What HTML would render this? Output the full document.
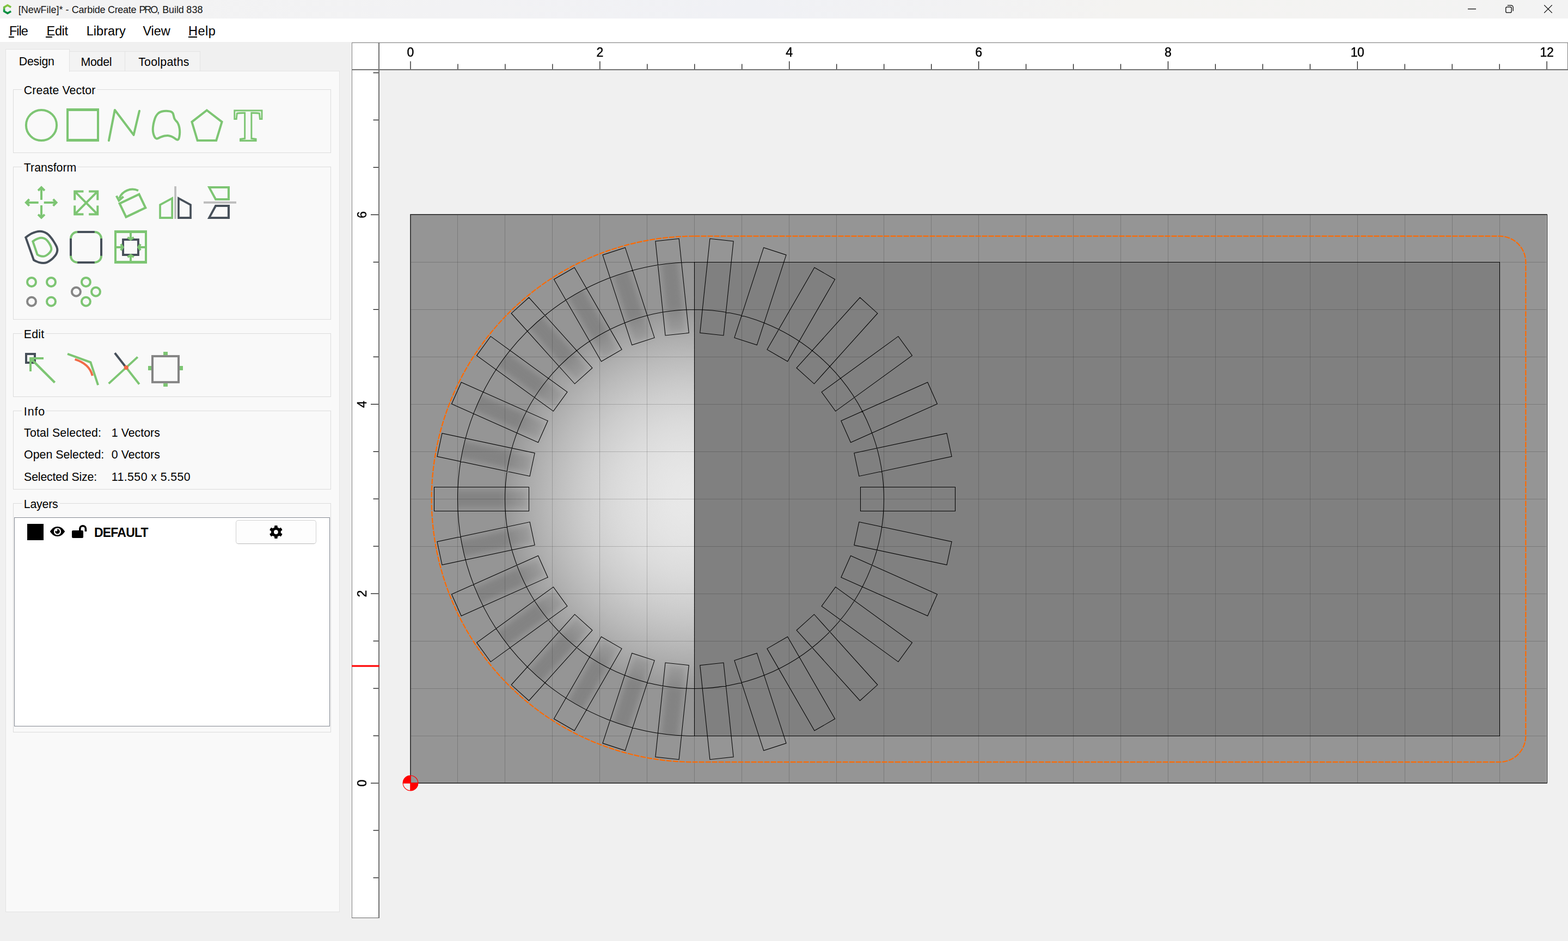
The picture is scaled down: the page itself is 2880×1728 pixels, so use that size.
<!DOCTYPE html>
<html lang="en"><head><meta charset="utf-8"><title>[NewFile]* - Carbide Create PRO, Build 838</title>
<style>html,body{margin:0;padding:0}body{width:2880px;height:1728px;overflow:hidden;position:relative;background:#f0f0f0;font-family:"Liberation Sans",sans-serif}#titlebar{position:absolute;left:0;top:0;width:2880px;height:34px;background:linear-gradient(90deg,#f3f3f3 0%,#f2f2f4 30%,#f0f1f5 48%,#f2f2f3 62%,#f4f3f1 72%,#f3f3f3 100%)}#menubar{position:absolute;left:0;top:34px;width:2880px;height:43px;background:#fff}u{text-decoration:underline;text-decoration-thickness:2px;text-underline-offset:3px}.ab{position:absolute}</style></head><body>
<svg width="2880" height="1728" viewBox="0 0 2880 1728" style="position:absolute;left:0;top:0">
<defs>
<radialGradient id="dome" gradientUnits="userSpaceOnUse" cx="1275.5" cy="916.5" r="348.0"><stop offset="0.0000" stop-color="rgb(232,232,232)"/><stop offset="0.0625" stop-color="rgb(232,232,232)"/><stop offset="0.1250" stop-color="rgb(231,231,231)"/><stop offset="0.1875" stop-color="rgb(229,229,229)"/><stop offset="0.2500" stop-color="rgb(227,227,227)"/><stop offset="0.3125" stop-color="rgb(224,224,224)"/><stop offset="0.3750" stop-color="rgb(221,221,221)"/><stop offset="0.4375" stop-color="rgb(217,217,217)"/><stop offset="0.5000" stop-color="rgb(212,212,212)"/><stop offset="0.5625" stop-color="rgb(207,207,207)"/><stop offset="0.6250" stop-color="rgb(201,201,201)"/><stop offset="0.6875" stop-color="rgb(194,194,194)"/><stop offset="0.7500" stop-color="rgb(187,187,187)"/><stop offset="0.8125" stop-color="rgb(179,179,179)"/><stop offset="0.8750" stop-color="rgb(171,171,171)"/><stop offset="0.9375" stop-color="rgb(162,162,162)"/><stop offset="1.0000" stop-color="rgb(152,152,152)"/></radialGradient>
<clipPath id="clipL"><path d="M1275.5,481.5 A435.0,435.0 0 0 0 1275.5,1351.5 Z"/></clipPath>
<clipPath id="clipDome"><path d="M1275.5,568.5 A348.0,348.0 0 0 0 1275.5,1264.5 Z"/></clipPath>
<filter id="blur" x="-20%" y="-20%" width="140%" height="140%"><feGaussianBlur stdDeviation="5"/></filter>
<linearGradient id="strip" gradientUnits="userSpaceOnUse" x1="304.5" y1="0" x2="435.0" y2="0"><stop offset="0" stop-color="#9e9e9e"/><stop offset="0.4" stop-color="#838383"/><stop offset="1" stop-color="#838383"/></linearGradient>
</defs>
<rect x="646" y="78" width="2234" height="50" fill="#fff"/>
<rect x="646" y="128" width="50" height="1557" fill="#fff"/>
<rect x="753" y="393" width="2089" height="1046" fill="#959595"/>
<rect x="1275.5" y="481.5" width="1479.0" height="870.0" fill="#808080"/>
<circle cx="1275.5" cy="916.5" r="348.0" fill="url(#dome)" clip-path="url(#clipDome)"/>
<g clip-path="url(#clipL)"><g filter="url(#blur)">
<rect x="308.50" y="-14.75" width="170.00" height="29.50" fill="url(#strip)" transform="translate(1275.5,916.5) rotate(-96)"/>
<rect x="308.50" y="-14.75" width="170.00" height="29.50" fill="url(#strip)" transform="translate(1275.5,916.5) rotate(-108)"/>
<rect x="308.50" y="-14.75" width="170.00" height="29.50" fill="url(#strip)" transform="translate(1275.5,916.5) rotate(-120)"/>
<rect x="308.50" y="-14.75" width="170.00" height="29.50" fill="url(#strip)" transform="translate(1275.5,916.5) rotate(-132)"/>
<rect x="308.50" y="-14.75" width="170.00" height="29.50" fill="url(#strip)" transform="translate(1275.5,916.5) rotate(-144)"/>
<rect x="308.50" y="-14.75" width="170.00" height="29.50" fill="url(#strip)" transform="translate(1275.5,916.5) rotate(-156)"/>
<rect x="308.50" y="-14.75" width="170.00" height="29.50" fill="url(#strip)" transform="translate(1275.5,916.5) rotate(-168)"/>
<rect x="308.50" y="-14.75" width="170.00" height="29.50" fill="url(#strip)" transform="translate(1275.5,916.5) rotate(-180)"/>
<rect x="308.50" y="-14.75" width="170.00" height="29.50" fill="url(#strip)" transform="translate(1275.5,916.5) rotate(-192)"/>
<rect x="308.50" y="-14.75" width="170.00" height="29.50" fill="url(#strip)" transform="translate(1275.5,916.5) rotate(-204)"/>
<rect x="308.50" y="-14.75" width="170.00" height="29.50" fill="url(#strip)" transform="translate(1275.5,916.5) rotate(-216)"/>
<rect x="308.50" y="-14.75" width="170.00" height="29.50" fill="url(#strip)" transform="translate(1275.5,916.5) rotate(-228)"/>
<rect x="308.50" y="-14.75" width="170.00" height="29.50" fill="url(#strip)" transform="translate(1275.5,916.5) rotate(-240)"/>
<rect x="308.50" y="-14.75" width="170.00" height="29.50" fill="url(#strip)" transform="translate(1275.5,916.5) rotate(-252)"/>
<rect x="308.50" y="-14.75" width="170.00" height="29.50" fill="url(#strip)" transform="translate(1275.5,916.5) rotate(-264)"/>
</g></g>
<path d="M840.50,394.5 V1438.5 M927.50,394.5 V1438.5 M1014.50,394.5 V1438.5 M1101.50,394.5 V1438.5 M1188.50,394.5 V1438.5 M1275.50,394.5 V1438.5 M1362.50,394.5 V1438.5 M1449.50,394.5 V1438.5 M1536.50,394.5 V1438.5 M1623.50,394.5 V1438.5 M1710.50,394.5 V1438.5 M1797.50,394.5 V1438.5 M1884.50,394.5 V1438.5 M1971.50,394.5 V1438.5 M2058.50,394.5 V1438.5 M2145.50,394.5 V1438.5 M2232.50,394.5 V1438.5 M2319.50,394.5 V1438.5 M2406.50,394.5 V1438.5 M2493.50,394.5 V1438.5 M2580.50,394.5 V1438.5 M2667.50,394.5 V1438.5 M2754.50,394.5 V1438.5 M753.5,1351.50 H2841.5 M753.5,1264.50 H2841.5 M753.5,1177.50 H2841.5 M753.5,1090.50 H2841.5 M753.5,1003.50 H2841.5 M753.5,916.50 H2841.5 M753.5,829.50 H2841.5 M753.5,742.50 H2841.5 M753.5,655.50 H2841.5 M753.5,568.50 H2841.5 M753.5,481.50 H2841.5" stroke="#000" stroke-opacity="0.175" stroke-width="1.0" fill="none"/>
<path d="M1275.5,481.5 A435.0,435.0 0 0 0 1275.5,1351.5 M1275.5,481.5 H2754.5 V1351.5 H1275.5 Z M1623.5,916.5 A348.0,348.0 0 1 0 927.5,916.5 A348.0,348.0 0 1 0 1623.5,916.5 Z M1580.50,894.50 L1754.50,894.50 L1754.50,938.50 L1580.50,938.50 Z M1568.82,831.92 L1739.02,795.74 L1748.07,838.29 L1577.87,874.47 Z M1544.83,772.78 L1703.78,702.01 L1721.48,741.75 L1562.52,812.52 Z M1509.06,719.92 L1649.83,617.65 L1675.40,652.84 L1534.63,755.12 Z M1463.09,675.66 L1579.52,546.35 L1611.84,575.46 L1495.41,704.77 Z M1408.91,641.92 L1495.91,491.23 L1533.59,512.98 L1446.59,663.67 Z M1348.91,620.18 L1402.68,454.70 L1444.05,468.14 L1390.28,633.62 Z M1285.70,611.39 L1303.89,438.35 L1347.15,442.89 L1328.96,615.94 Z M1222.04,615.94 L1203.85,442.89 L1247.11,438.35 L1265.30,611.39 Z M1160.72,633.62 L1106.95,468.14 L1148.32,454.70 L1202.09,620.18 Z M1104.41,663.67 L1017.41,512.98 L1055.09,491.23 L1142.09,641.92 Z M1055.59,704.77 L939.16,575.46 L971.48,546.35 L1087.91,675.66 Z M1016.37,755.12 L875.60,652.84 L901.17,617.65 L1041.94,719.92 Z M988.48,812.52 L829.52,741.75 L847.22,702.01 L1006.17,772.78 Z M973.13,874.47 L802.93,838.29 L811.98,795.74 L982.18,831.92 Z M971.50,938.50 L797.50,938.50 L797.50,894.50 L971.50,894.50 Z M982.18,1001.08 L811.98,1037.26 L802.93,994.71 L973.13,958.53 Z M1006.17,1060.22 L847.22,1130.99 L829.52,1091.25 L988.48,1020.48 Z M1041.94,1113.08 L901.17,1215.35 L875.60,1180.16 L1016.37,1077.88 Z M1087.91,1157.34 L971.48,1286.65 L939.16,1257.54 L1055.59,1128.23 Z M1142.09,1191.08 L1055.09,1341.77 L1017.41,1320.02 L1104.41,1169.33 Z M1202.09,1212.82 L1148.32,1378.30 L1106.95,1364.86 L1160.72,1199.38 Z M1265.30,1221.61 L1247.11,1394.65 L1203.85,1390.11 L1222.04,1217.06 Z M1328.96,1217.06 L1347.15,1390.11 L1303.89,1394.65 L1285.70,1221.61 Z M1390.28,1199.38 L1444.05,1364.86 L1402.68,1378.30 L1348.91,1212.82 Z M1446.59,1169.33 L1533.59,1320.02 L1495.91,1341.77 L1408.91,1191.08 Z M1495.41,1128.23 L1611.84,1257.54 L1579.52,1286.65 L1463.09,1157.34 Z M1534.63,1077.88 L1675.40,1180.16 L1649.83,1215.35 L1509.06,1113.08 Z M1562.52,1020.48 L1721.48,1091.25 L1703.78,1130.99 L1544.83,1060.22 Z M1577.87,958.53 L1748.07,994.71 L1739.02,1037.26 L1568.82,1001.08 Z" stroke="#000" stroke-width="1.05" fill="none"/>
<path d="M1275.5,433.65000000000003 H2754.5 A47.85,47.85 0 0 1 2802.35,481.5 V1351.5 A47.85,47.85 0 0 1 2754.5,1399.35 H1275.5 A482.84999999999997,482.84999999999997 0 0 1 1275.5,433.65000000000003 Z" stroke="#ff6a00" stroke-width="2.2" stroke-dasharray="10 2" fill="none"/>
<path d="M2840.5,395 V1437" stroke="#fff" stroke-opacity="0.45" stroke-width="1" fill="none"/>
<path d="M752.5,392.5 H2842.5 V1439.5 H752.5 Z" fill="none" stroke="#f8f8f8" stroke-width="1"/>
<path d="M2841,394 H754 V1438 H2841" fill="none" stroke="#404040" stroke-width="2" stroke-linejoin="round"/>
<path d="M2841.6,393.5 V1438.5" fill="none" stroke="#262626" stroke-width="1.2"/>
<g transform="translate(754,1438)"><path d="M0,0 L0,14.2 A14.2,14.2 0 0 1 -14.2,0 Z" fill="#f0f0f0"/><path d="M0,0 L-14.2,0 A14.2,14.2 0 0 1 0,-14.2 Z M0,0 L14.2,0 A14.2,14.2 0 0 1 0,14.2 Z" fill="#ff0000"/><path d="M-14.2,0 H14.2 M0,-14.2 V14.2" stroke="#ff0000" stroke-width="1.6" fill="none"/><circle r="13.799999999999999" fill="none" stroke="#ff0000" stroke-width="1.1"/></g>
<path d="M646,78.5 H2880 M646.5,78 V1685 M2879.5,78 V128" stroke="#808080" stroke-width="1" fill="none"/>
<path d="M646,1685.5 H697" stroke="#666" stroke-width="1" fill="none"/>
<path d="M646,128 H2880 M696,78 V1685.5" stroke="#727272" stroke-width="2" fill="none"/>
<path d="M754.00,112.5 V127 M840.97,117.5 V127 M927.93,117.5 V127 M1014.89,117.5 V127 M1101.86,112.5 V127 M1188.83,117.5 V127 M1275.79,117.5 V127 M1362.76,117.5 V127 M1449.72,112.5 V127 M1536.68,117.5 V127 M1623.65,117.5 V127 M1710.62,117.5 V127 M1797.58,112.5 V127 M1884.55,117.5 V127 M1971.51,117.5 V127 M2058.48,117.5 V127 M2145.44,112.5 V127 M2232.40,117.5 V127 M2319.37,117.5 V127 M2406.34,117.5 V127 M2493.30,112.5 V127 M2580.27,117.5 V127 M2667.23,117.5 V127 M2754.20,117.5 V127 M2841.16,112.5 V127 M685.5,1611.93 H695 M685.5,1524.96 H695 M681,1438.00 H695 M685.5,1351.04 H695 M685.5,1264.07 H695 M685.5,1177.11 H695 M681,1090.14 H695 M685.5,1003.17 H695 M685.5,916.21 H695 M685.5,829.25 H695 M681,742.28 H695 M685.5,655.31 H695 M685.5,568.35 H695 M685.5,481.38 H695 M681,394.42 H695 M685.5,307.45 H695 M685.5,220.49 H695 M685.5,133.52 H695" stroke="#000" stroke-opacity="0.95" stroke-width="1.25" fill="none"/>
<text x="753.75" y="104" font-family="Liberation Sans, sans-serif" font-size="23" text-anchor="middle" letter-spacing="-0.5" fill="#000" stroke="#000" stroke-width="0.45">0</text>
<text x="1101.61" y="104" font-family="Liberation Sans, sans-serif" font-size="23" text-anchor="middle" letter-spacing="-0.5" fill="#000" stroke="#000" stroke-width="0.45">2</text>
<text x="1449.47" y="104" font-family="Liberation Sans, sans-serif" font-size="23" text-anchor="middle" letter-spacing="-0.5" fill="#000" stroke="#000" stroke-width="0.45">4</text>
<text x="1797.33" y="104" font-family="Liberation Sans, sans-serif" font-size="23" text-anchor="middle" letter-spacing="-0.5" fill="#000" stroke="#000" stroke-width="0.45">6</text>
<text x="2145.19" y="104" font-family="Liberation Sans, sans-serif" font-size="23" text-anchor="middle" letter-spacing="-0.5" fill="#000" stroke="#000" stroke-width="0.45">8</text>
<text x="2493.05" y="104" font-family="Liberation Sans, sans-serif" font-size="23" text-anchor="middle" letter-spacing="-0.5" fill="#000" stroke="#000" stroke-width="0.45">10</text>
<text x="2840.91" y="104" font-family="Liberation Sans, sans-serif" font-size="23" text-anchor="middle" letter-spacing="-0.5" fill="#000" stroke="#000" stroke-width="0.45">12</text>
<text transform="translate(672.6,1438.25) rotate(-90)" font-family="Liberation Sans, sans-serif" font-size="23" text-anchor="middle" letter-spacing="-0.5" fill="#000" stroke="#000" stroke-width="0.45">0</text>
<text transform="translate(672.6,1090.39) rotate(-90)" font-family="Liberation Sans, sans-serif" font-size="23" text-anchor="middle" letter-spacing="-0.5" fill="#000" stroke="#000" stroke-width="0.45">2</text>
<text transform="translate(672.6,742.53) rotate(-90)" font-family="Liberation Sans, sans-serif" font-size="23" text-anchor="middle" letter-spacing="-0.5" fill="#000" stroke="#000" stroke-width="0.45">4</text>
<text transform="translate(672.6,394.67) rotate(-90)" font-family="Liberation Sans, sans-serif" font-size="23" text-anchor="middle" letter-spacing="-0.5" fill="#000" stroke="#000" stroke-width="0.45">6</text>
<rect x="646" y="1221.45" width="51" height="3.1" fill="#ff0000"/>
</svg>
<div id="titlebar"></div><div id="menubar"></div>
<div id="title" style="position:absolute;left:0;top:0;width:400px;height:34px">
<div style="position:absolute;left:33.80px;top:6.66px;font-family:'Liberation Sans',sans-serif;font-size:18px;font-weight:400;line-height:23px;white-space:pre;color:#161616;letter-spacing:-0.048px;word-spacing:0px;">[NewFile]*</div>
<div style="position:absolute;left:120.40px;top:6.66px;font-family:'Liberation Sans',sans-serif;font-size:18px;font-weight:400;line-height:23px;white-space:pre;color:#161616;letter-spacing:0.900px;word-spacing:0px;">-</div>
<div style="position:absolute;left:131.80px;top:6.66px;font-family:'Liberation Sans',sans-serif;font-size:18px;font-weight:400;line-height:23px;white-space:pre;color:#161616;letter-spacing:-0.224px;word-spacing:0px;">Carbide</div>
<div style="position:absolute;left:198.00px;top:6.66px;font-family:'Liberation Sans',sans-serif;font-size:18px;font-weight:400;line-height:23px;white-space:pre;color:#161616;letter-spacing:-0.326px;word-spacing:0px;">Create</div>
<div style="position:absolute;left:255.40px;top:6.66px;font-family:'Liberation Sans',sans-serif;font-size:18px;font-weight:400;line-height:23px;white-space:pre;color:#161616;letter-spacing:-2.072px;word-spacing:0px;">PRO,</div>
<div style="position:absolute;left:298.20px;top:6.66px;font-family:'Liberation Sans',sans-serif;font-size:18px;font-weight:400;line-height:23px;white-space:pre;color:#161616;letter-spacing:-0.108px;word-spacing:0px;">Build</div>
<div style="position:absolute;left:342.30px;top:6.66px;font-family:'Liberation Sans',sans-serif;font-size:18px;font-weight:400;line-height:23px;white-space:pre;color:#161616;letter-spacing:0.127px;word-spacing:0px;">838</div>
</div>
<div style="position:absolute;left:17.00px;top:41.76px;font-family:'Liberation Sans',sans-serif;font-size:23.5px;font-weight:400;line-height:31px;white-space:pre;color:#000;letter-spacing:-1.025px;word-spacing:0px;">File</div>
<div style="position:absolute;left:16.0px;top:67.1px;width:10.0px;height:2px;background:#000"></div>
<div style="position:absolute;left:85.60px;top:41.76px;font-family:'Liberation Sans',sans-serif;font-size:23.5px;font-weight:400;line-height:31px;white-space:pre;color:#000;letter-spacing:-0.367px;word-spacing:0px;">Edit</div>
<div style="position:absolute;left:84.1px;top:67.1px;width:11.9px;height:2px;background:#000"></div>
<div style="position:absolute;left:158.70px;top:41.76px;font-family:'Liberation Sans',sans-serif;font-size:23.5px;font-weight:400;line-height:31px;white-space:pre;color:#000;letter-spacing:0.026px;word-spacing:0px;">Library</div>
<div style="position:absolute;left:262.40px;top:41.76px;font-family:'Liberation Sans',sans-serif;font-size:23.5px;font-weight:400;line-height:31px;white-space:pre;color:#000;letter-spacing:-0.039px;word-spacing:0px;">View</div>
<div style="position:absolute;left:346.00px;top:41.76px;font-family:'Liberation Sans',sans-serif;font-size:23.5px;font-weight:400;line-height:31px;white-space:pre;color:#000;letter-spacing:0.485px;word-spacing:0px;">Help</div>
<div style="position:absolute;left:346.1px;top:67.1px;width:15.9px;height:2px;background:#000"></div>
<div style="position:absolute;left:127px;top:94px;width:103px;height:37px;box-sizing:border-box;background:#f3f3f3;border:1px solid #e3e3e3;"></div>
<div style="position:absolute;left:229px;top:94px;width:139px;height:37px;box-sizing:border-box;background:#f3f3f3;border:1px solid #e3e3e3;"></div>
<div style="position:absolute;left:10px;top:130px;width:614px;height:1545px;box-sizing:border-box;background:#f9f9f9;border:1px solid #e3e3e3;"></div>
<div style="position:absolute;left:10px;top:90px;width:118px;height:42px;box-sizing:border-box;background:#f9f9f9;border:1px solid #e3e3e3;border-bottom:none;"></div>
<div style="position:absolute;left:34.80px;top:98.51px;font-family:'Liberation Sans',sans-serif;font-size:21.33px;font-weight:400;line-height:28px;white-space:pre;color:#000;letter-spacing:-0.258px;word-spacing:0px;">Design</div>
<div style="position:absolute;left:148.40px;top:100.41px;font-family:'Liberation Sans',sans-serif;font-size:21.33px;font-weight:400;line-height:28px;white-space:pre;color:#000;letter-spacing:-0.223px;word-spacing:0px;">Model</div>
<div style="position:absolute;left:254.20px;top:100.41px;font-family:'Liberation Sans',sans-serif;font-size:21.33px;font-weight:400;line-height:28px;white-space:pre;color:#000;letter-spacing:0.248px;word-spacing:0px;">Toolpaths</div>
<div style="position:absolute;left:24px;top:164px;width:584px;height:117px;box-sizing:border-box;border:1px solid #dcdcdc;"></div>
<div style="position:absolute;left:40px;top:164px;width:138.1px;height:1px;background:#f9f9f9"></div>
<div style="position:absolute;left:43.80px;top:152.21px;font-family:'Liberation Sans',sans-serif;font-size:21.33px;font-weight:400;line-height:28px;white-space:pre;color:#000;letter-spacing:0.099px;word-spacing:0px;">Create Vector</div>
<div style="position:absolute;left:24px;top:306px;width:584px;height:281px;box-sizing:border-box;border:1px solid #dcdcdc;"></div>
<div style="position:absolute;left:40px;top:306px;width:103.1px;height:1px;background:#f9f9f9"></div>
<div style="position:absolute;left:43.80px;top:294.21px;font-family:'Liberation Sans',sans-serif;font-size:21.33px;font-weight:400;line-height:28px;white-space:pre;color:#000;letter-spacing:0.026px;word-spacing:0px;">Transform</div>
<div style="position:absolute;left:24px;top:612px;width:584px;height:117px;box-sizing:border-box;border:1px solid #dcdcdc;"></div>
<div style="position:absolute;left:40px;top:612px;width:43.9px;height:1px;background:#f9f9f9"></div>
<div style="position:absolute;left:43.80px;top:600.21px;font-family:'Liberation Sans',sans-serif;font-size:21.33px;font-weight:400;line-height:28px;white-space:pre;color:#000;letter-spacing:0.211px;word-spacing:0px;">Edit</div>
<div style="position:absolute;left:24px;top:754px;width:584px;height:145px;box-sizing:border-box;border:1px solid #dcdcdc;"></div>
<div style="position:absolute;left:40px;top:754px;width:44.9px;height:1px;background:#f9f9f9"></div>
<div style="position:absolute;left:43.80px;top:742.21px;font-family:'Liberation Sans',sans-serif;font-size:21.33px;font-weight:400;line-height:28px;white-space:pre;color:#000;letter-spacing:0.941px;word-spacing:0px;">Info</div>
<div style="position:absolute;left:24px;top:924px;width:584px;height:421px;box-sizing:border-box;border:1px solid #dcdcdc;"></div>
<div style="position:absolute;left:40px;top:924px;width:69.5px;height:1px;background:#f9f9f9"></div>
<div style="position:absolute;left:43.80px;top:912.21px;font-family:'Liberation Sans',sans-serif;font-size:21.33px;font-weight:400;line-height:28px;white-space:pre;color:#000;letter-spacing:-0.206px;word-spacing:0px;">Layers</div>
<div style="position:absolute;left:44.10px;top:781.41px;font-family:'Liberation Sans',sans-serif;font-size:21.33px;font-weight:400;line-height:28px;white-space:pre;color:#000;letter-spacing:0.142px;word-spacing:0px;">Total Selected:</div>
<div style="position:absolute;left:204.80px;top:781.41px;font-family:'Liberation Sans',sans-serif;font-size:21.33px;font-weight:400;line-height:28px;white-space:pre;color:#000;letter-spacing:0.022px;word-spacing:0px;">1 Vectors</div>
<div style="position:absolute;left:44.10px;top:821.31px;font-family:'Liberation Sans',sans-serif;font-size:21.33px;font-weight:400;line-height:28px;white-space:pre;color:#000;letter-spacing:0.013px;word-spacing:0px;">Open Selected:</div>
<div style="position:absolute;left:204.80px;top:821.31px;font-family:'Liberation Sans',sans-serif;font-size:21.33px;font-weight:400;line-height:28px;white-space:pre;color:#000;letter-spacing:0.022px;word-spacing:0px;">0 Vectors</div>
<div style="position:absolute;left:44.10px;top:862.01px;font-family:'Liberation Sans',sans-serif;font-size:21.33px;font-weight:400;line-height:28px;white-space:pre;color:#000;letter-spacing:-0.173px;word-spacing:0px;">Selected Size:</div>
<div style="position:absolute;left:204.80px;top:862.01px;font-family:'Liberation Sans',sans-serif;font-size:21.33px;font-weight:400;line-height:28px;white-space:pre;color:#000;letter-spacing:0.412px;word-spacing:0px;">11.550 x 5.550</div>
<div style="position:absolute;left:26px;top:950px;width:580px;height:384px;box-sizing:border-box;background:#fff;border:1px solid #828790;"></div>
<div style="position:absolute;left:50px;top:962px;width:30px;height:30px;box-sizing:border-box;background:#000;"></div>
<div style="position:absolute;left:173.00px;top:963.03px;font-family:'Liberation Sans',sans-serif;font-size:23px;font-weight:700;line-height:30px;white-space:pre;color:#000;letter-spacing:-0.791px;word-spacing:0px;">DEFAULT</div>
<div style="position:absolute;left:433px;top:955px;width:148px;height:44px;box-sizing:border-box;background:#fdfdfd;border:1px solid #d0d0d0;border-radius:5px;border-bottom-color:#b8b8b8;"></div>
<svg width="2880" height="1728" viewBox="0 0 2880 1728" style="position:absolute;left:0;top:0;pointer-events:none">
<defs><linearGradient id="lg" x1="0" y1="0" x2="0" y2="1"><stop offset="0" stop-color="#8cc63f"/><stop offset="0.45" stop-color="#5db946"/><stop offset="0.6" stop-color="#129a48"/><stop offset="1" stop-color="#0a8a3f"/></linearGradient></defs>
<path d="M20.2,13.2 L13.9,9.6 L7.6,13.2 V20.8 L13.9,24.4 L20.2,20.8" fill="none" stroke="url(#lg)" stroke-width="3.6" stroke-linejoin="miter"/>
<path d="M2696,16.5 H2711" stroke="#000" stroke-width="1.25" fill="none"/>
<rect x="2765.8" y="12.8" width="10.4" height="10.4" rx="2.2" fill="none" stroke="#000" stroke-width="1.25"/>
<path d="M2769.2,9.8 H2775.5 A3.7,3.7 0 0 1 2779.2,13.5 V19.8" fill="none" stroke="#000" stroke-width="1.25" stroke-linecap="round"/>
<path d="M2836.6,9.6 L2850.4,23.4 M2850.4,9.6 L2836.6,23.4" stroke="#000" stroke-width="1.25" fill="none" stroke-linecap="round"/>
<circle cx="76" cy="230" r="28.1" fill="none" stroke="#7dc573" stroke-width="4"/>
<path fill-rule="evenodd" fill="#7dc573" d="M122,199 H182 V260 H122 Z M126.1,204 V255 H178 V204 Z"/>
<path d="M199.9,258.1 L210.9,202 L245.5,247.8 L256,203.7" fill="none" stroke="#7dc573" stroke-width="4" stroke-linecap="round" stroke-linejoin="round"/>
<path d="M300.98,204.10 C303.35,203.77 306.13,203.80 308.25,203.92 C310.38,204.04 312.20,204.22 313.71,204.83 C315.23,205.44 316.49,206.32 317.35,207.56 C318.21,208.80 318.38,210.64 318.87,212.29 C319.35,213.94 319.60,215.93 320.26,217.44 C320.92,218.96 321.88,220.17 322.81,221.39 C323.74,222.60 324.93,223.31 325.84,224.72 C326.75,226.14 327.61,227.90 328.27,229.88 C328.92,231.85 329.46,234.32 329.78,236.55 C330.11,238.77 330.26,240.89 330.21,243.22 C330.16,245.54 329.82,248.52 329.48,250.49 C329.13,252.47 328.70,254.00 328.14,255.04 C327.59,256.08 326.93,256.64 326.14,256.74 C325.35,256.84 324.48,256.24 323.41,255.65 C322.35,255.06 321.29,254.10 319.78,253.22 C318.26,252.34 316.24,251.08 314.32,250.37 C312.40,249.67 310.27,249.11 308.25,248.98 C306.23,248.85 304.31,249.13 302.19,249.58 C300.07,250.04 297.44,251.00 295.52,251.71 C293.60,252.41 291.93,253.32 290.67,253.83 C289.40,254.33 288.87,254.87 287.94,254.74 C287.01,254.61 285.95,254.05 285.09,253.04 C284.23,252.03 283.42,250.31 282.78,248.67 C282.15,247.04 281.60,245.14 281.27,243.22 C280.93,241.30 280.73,239.48 280.78,237.15 C280.83,234.83 281.14,231.90 281.57,229.27 C282.01,226.64 282.68,223.81 283.39,221.39 C284.10,218.96 284.80,216.74 285.82,214.71 C286.83,212.69 288.09,210.72 289.45,209.26 C290.82,207.79 292.08,206.78 294.00,205.92 C295.92,205.06 298.60,204.44 300.98,204.10 Z" fill="none" stroke="#7dc573" stroke-width="4" stroke-linejoin="round"/>
<path d="M379.90,202.50 L407.60,223.80 L397.20,258.00 L362.70,258.00 L352.40,223.80 Z" fill="none" stroke="#7dc573" stroke-width="4" stroke-linejoin="miter"/>
<text transform="translate(455.8,258.7) scale(0.935,1)" x="0" y="0" text-anchor="middle" font-family="Liberation Serif, serif" font-weight="700" font-size="84.5" fill="none" stroke="#7dc573" stroke-width="3.1" stroke-linejoin="miter">T</text>
<path d="M80.70,371.90 L103.50,371.90 M97.60,377.80 L103.50,371.90 L97.60,366.00" stroke="#7dc573" stroke-width="4" fill="none" stroke-linejoin="miter" stroke-miterlimit="10"/>
<path d="M76.00,376.90 L76.00,399.70 M70.10,393.80 L76.00,399.70 L81.90,393.80" stroke="#7dc573" stroke-width="4" fill="none" stroke-linejoin="miter" stroke-miterlimit="10"/>
<path d="M70.70,371.90 L47.90,371.90 M53.80,366.00 L47.90,371.90 L53.80,377.80" stroke="#7dc573" stroke-width="4" fill="none" stroke-linejoin="miter" stroke-miterlimit="10"/>
<path d="M76.00,366.90 L76.00,344.10 M81.90,350.00 L76.00,344.10 L70.10,350.00" stroke="#7dc573" stroke-width="4" fill="none" stroke-linejoin="miter" stroke-miterlimit="10"/>
<path d="M137.2,367.59999999999997 V351.4 H153.39999999999998 M163.10000000000002,351.4 H179.3 V367.59999999999997 M179.3,377.40000000000003 V393.6 H163.10000000000002 M153.39999999999998,393.6 H137.2 V377.40000000000003 M137.2,351.4 L179.3,393.6 M179.3,351.4 L137.2,393.6" fill="none" stroke="#7dc573" stroke-width="4" stroke-linejoin="miter"/>
<rect x="-19.8" y="-13.75" width="39.6" height="27.5" transform="translate(243.5,377.6) rotate(-25.5)" fill="none" stroke="#7dc573" stroke-width="4.1" stroke-linejoin="miter"/>
<path d="M254,350 A26,26 0 0 0 219.1,364.2" fill="none" stroke="#7dc573" stroke-width="4"/>
<path d="M213.77,359.59 L218.38,368.33 L226.69,361.05" fill="none" stroke="#7dc573" stroke-width="4" stroke-linejoin="miter"/>
<path fill-rule="evenodd" fill="#7dc573" d="M292.2,401.9 V374.9 L318,360.9 V401.9 Z M295.9,398 H314.3 V367.3 L295.9,377.3 Z"/>
<rect x="320.2" y="342.1" width="3.7" height="59.8" fill="#bdbdbd"/>
<path fill-rule="evenodd" fill="#47505a" d="M351.9,401.9 V374.9 L326.1,360.9 V401.9 Z M348.2,398 H329.8 V367.3 L348.2,377.3 Z"/>
<path fill-rule="evenodd" fill="#7dc573" d="M380.9,342.1 H422 V367.9 H394.9 Z M387.4,346.1 L397.3,364 H417.9 V346.1 Z"/>
<rect x="374" y="369.9" width="60" height="3.9" fill="#bdbdbd"/>
<path fill-rule="evenodd" fill="#47505a" d="M394.9,376.1 H422 V401.9 H380.9 Z M397.3,380 L387.4,397.9 H417.9 V380 Z"/>
<path d="M47.28,436.08 C48.09,435.47 50.31,433.65 52.13,432.44 C53.95,431.22 55.87,429.89 58.19,428.80 C60.52,427.71 63.55,426.55 66.08,425.89 C68.60,425.23 71.03,424.86 73.35,424.86 C75.68,424.86 77.90,425.23 80.02,425.89 C82.15,426.55 84.37,427.71 86.09,428.80 C87.81,429.89 88.92,430.97 90.33,432.44 C91.75,433.90 93.26,435.87 94.58,437.59 C95.89,439.31 97.00,440.88 98.22,442.75 C99.43,444.62 100.84,446.99 101.86,448.81 C102.87,450.63 103.70,451.84 104.28,453.66 C104.87,455.48 105.58,457.50 105.37,459.73 C105.17,461.95 104.26,464.78 103.07,467.00 C101.88,469.23 99.94,471.25 98.22,473.07 C96.50,474.89 94.78,476.45 92.76,477.92 C90.74,479.39 88.31,481.00 86.09,481.86 C83.86,482.72 81.84,483.07 79.42,483.07 C76.99,483.07 73.86,482.47 71.53,481.86 C69.21,481.26 67.07,480.17 65.47,479.44 C63.87,478.70 62.54,477.77 61.95,477.43 Z" fill="none" stroke="#47505a" stroke-width="4" stroke-linejoin="miter"/>
<path d="M60.32,443.35 C61.07,442.85 63.20,441.23 64.86,440.32 C66.53,439.41 68.55,438.47 70.32,437.90 C72.09,437.32 73.76,436.92 75.48,436.86 C77.19,436.81 79.06,437.07 80.63,437.59 C82.20,438.12 83.66,439.06 84.88,440.02 C86.09,440.98 86.90,442.09 87.91,443.35 C88.92,444.62 90.03,446.08 90.94,447.60 C91.85,449.11 92.81,450.73 93.37,452.45 C93.92,454.17 94.48,456.19 94.28,457.91 C94.07,459.63 93.21,461.24 92.15,462.76 C91.09,464.28 89.32,465.84 87.91,467.00 C86.49,468.17 85.18,469.10 83.66,469.73 C82.15,470.37 80.63,470.82 78.81,470.82 C76.99,470.82 74.47,470.32 72.75,469.73 C71.03,469.15 69.21,467.71 68.50,467.31 Z" fill="none" stroke="#7dc573" stroke-width="4" stroke-linejoin="miter"/>
<rect x="130" y="426" width="56" height="56" rx="12.1" fill="none" stroke="#7dc573" stroke-width="4"/>
<path d="M142.2,426 H173.8 M142.2,482 H173.8 M130,438 V469.8 M186,438 V469.8" stroke="#47505a" stroke-width="4" fill="none"/>
<path fill-rule="evenodd" fill="#7dc573" d="M210,423 H270 V484 H210 Z M214,428 V479 H266 V428 Z"/>
<path fill-rule="evenodd" fill="#47505a" d="M224.1,438 H255.9 V469.9 H224.1 Z M228,442 V466 H252 V442 Z"/>
<path d="M267.00,454.00 L254.30,454.00 M258.10,459.70 L254.30,454.00 L258.10,448.30" stroke="#7dc573" stroke-width="4" fill="none" stroke-linejoin="miter"/>
<path d="M240.00,481.00 L240.00,468.30 M234.30,472.10 L240.00,468.30 L245.70,472.10" stroke="#7dc573" stroke-width="4" fill="none" stroke-linejoin="miter"/>
<path d="M213.00,454.00 L225.70,454.00 M221.90,448.30 L225.70,454.00 L221.90,459.70" stroke="#7dc573" stroke-width="4" fill="none" stroke-linejoin="miter"/>
<path d="M240.00,427.00 L240.00,439.70 M245.70,435.90 L240.00,439.70 L234.30,435.90" stroke="#7dc573" stroke-width="4" fill="none" stroke-linejoin="miter"/>
<circle cx="58" cy="517.9" r="8" fill="none" stroke="#7dc573" stroke-width="4"/>
<circle cx="94" cy="517.9" r="8" fill="none" stroke="#7dc573" stroke-width="4"/>
<circle cx="58" cy="553.8" r="8" fill="none" stroke="#868686" stroke-width="4"/>
<circle cx="94" cy="553.8" r="8" fill="none" stroke="#7dc573" stroke-width="4"/>
<circle cx="157.9" cy="517.9" r="8" fill="none" stroke="#7dc573" stroke-width="4"/>
<circle cx="139.9" cy="535.8" r="8" fill="none" stroke="#868686" stroke-width="4"/>
<circle cx="176" cy="535.8" r="8" fill="none" stroke="#7dc573" stroke-width="4"/>
<circle cx="157.9" cy="553.8" r="8" fill="none" stroke="#7dc573" stroke-width="4"/>
<rect x="48" y="650" width="16" height="16" fill="none" stroke="#47505a" stroke-width="4"/>
<path d="M54.07,656.1 H80 V659.9 H58 V682 H54.07 Z" fill="#7dc573"/>
<path d="M56.5,658.5 L100.6,702.6" stroke="#7dc573" stroke-width="4.3" fill="none"/>
<path d="M124,649.9 L166.4,665.3 L180.1,707.2" stroke="#7dc573" stroke-width="4" fill="none" stroke-linejoin="miter"/>
<path d="M137.6,659.9 Q164,667.9 169.8,689.9" stroke="#f06b48" stroke-width="4" fill="none"/>
<path d="M199.7,704.4 L252.8,655.6 M231.8,675 L255.8,705.6" stroke="#7dc573" stroke-width="4" fill="none"/>
<path d="M210.9,648.3 L231.8,675" stroke="#47505a" stroke-width="4" fill="none"/>
<circle cx="231.8" cy="675" r="4.1" fill="#f06b48"/>
<path d="M300.07,646 H308 V652.1 H300.07 Z M300.07,703.8 H308 V710 H300.07 Z M272,672 H278.05 V679.9 H272 Z M330,672 H336 V679.9 H330 Z" fill="#7dc573"/>
<rect x="280" y="654.1" width="48" height="47.7" fill="none" stroke="#848484" stroke-width="4"/>
<path d="M91.8,976 C95.5,970.2 100,967 105.5,967 C111,967 115.5,970.2 119.2,976 C115.5,981.8 111,985 105.5,985 C100,985 95.5,981.8 91.8,976 Z" fill="#000"/>
<circle cx="105.5" cy="976" r="6.6" fill="#fff"/>
<circle cx="105.5" cy="976" r="4.4" fill="#000"/>
<circle cx="103.2" cy="973.4" r="2.2" fill="#fff"/>
<path d="M103.2,973.4 m2.2,0 a2.2,2.2 0 0 1 -2.2,2.2" fill="none" stroke="#000" stroke-width="0"/>
<rect x="132" y="974" width="21" height="14" rx="2" fill="#000"/>
<path d="M146.8,975 V971 A5.3,5.3 0 0 1 157.4,971 V975.9" fill="none" stroke="#000" stroke-width="3.6"/>
<circle cx="506.9" cy="977.0" r="9.0" fill="#000"/><rect x="504.09999999999997" y="965.0" width="5.6" height="8.0" rx="1" fill="#000" transform="rotate(0 506.9 977.0)"/><rect x="504.09999999999997" y="965.0" width="5.6" height="8.0" rx="1" fill="#000" transform="rotate(60 506.9 977.0)"/><rect x="504.09999999999997" y="965.0" width="5.6" height="8.0" rx="1" fill="#000" transform="rotate(120 506.9 977.0)"/><rect x="504.09999999999997" y="965.0" width="5.6" height="8.0" rx="1" fill="#000" transform="rotate(180 506.9 977.0)"/><rect x="504.09999999999997" y="965.0" width="5.6" height="8.0" rx="1" fill="#000" transform="rotate(240 506.9 977.0)"/><rect x="504.09999999999997" y="965.0" width="5.6" height="8.0" rx="1" fill="#000" transform="rotate(300 506.9 977.0)"/><circle cx="506.9" cy="977.0" r="3.9" fill="#fdfdfd"/>
</svg>
</body></html>
